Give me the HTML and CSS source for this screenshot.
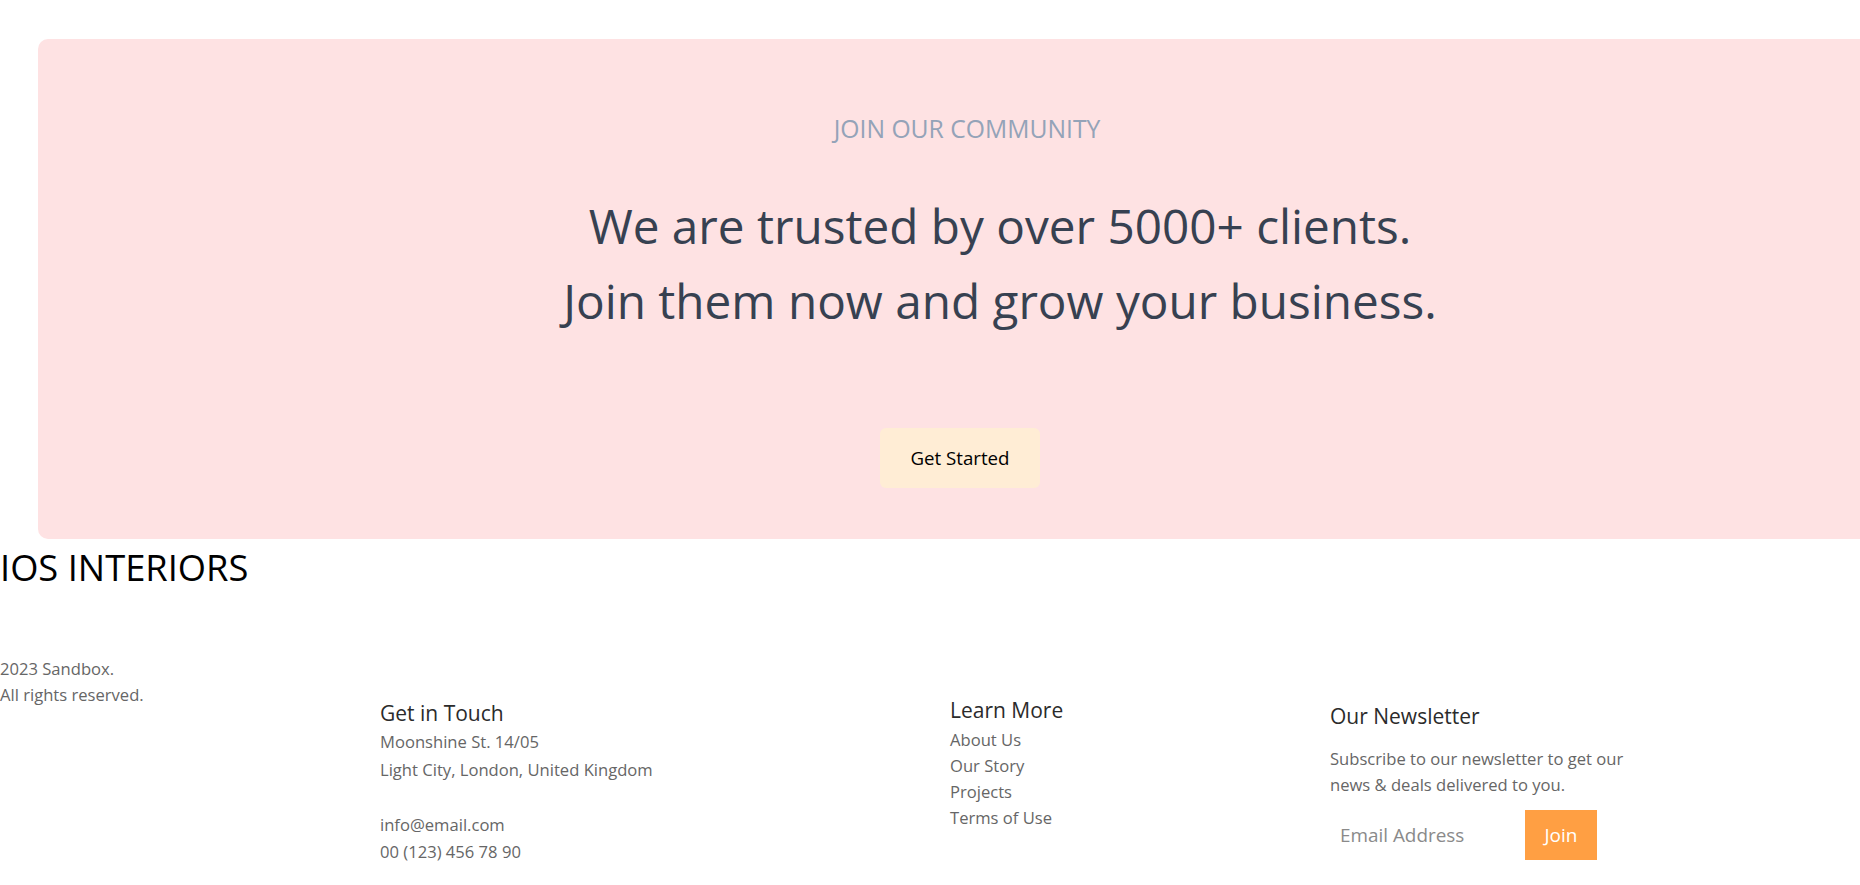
FILE: index.html
```html
<!DOCTYPE html>
<html lang="en">
<head>
<meta charset="utf-8">
<title>IOS Interiors</title>
<link rel="stylesheet" href="styles.css">
</head>
<body>
<section class="cta">
  <div class="cta-box">
    <p class="eyebrow">JOIN OUR COMMUNITY</p>
    <h2 class="headline">We are trusted by over 5000+ clients.<br>Join them now and grow your business.</h2>
    <a class="btn-start" href="#">Get Started</a>
  </div>
</section>
<footer class="footer">
  <div class="brand">
    <h1 class="brand-title">IOS INTERIORS</h1>
    <p class="copy">2023 Sandbox.<br>All rights reserved.</p>
  </div>
  <div class="col col-touch">
    <h3 class="col-title">Get in Touch</h3>
    <p class="col-text">Moonshine St. 14/05<br>Light City, London, United Kingdom<br><br>info@email.com<br>00 (123) 456 78 90</p>
  </div>
  <div class="col col-learn">
    <h3 class="col-title">Learn More</h3>
    <ul class="links">
      <li><a href="#">About Us</a></li>
      <li><a href="#">Our Story</a></li>
      <li><a href="#">Projects</a></li>
      <li><a href="#">Terms of Use</a></li>
    </ul>
  </div>
  <div class="col col-news">
    <h3 class="col-title">Our Newsletter</h3>
    <p class="news-text">Subscribe to our newsletter to get our news &amp; deals delivered to you.</p>
    <form class="news-form">
      <input class="news-input" type="email" placeholder="Email Address">
      <button class="news-btn" type="button">Join</button>
    </form>
  </div>
</footer>
</body>
</html>
```
FILE: styles.css
```css
html, body {
  margin: 0;
  padding: 0;
  overflow: hidden;
  background: #ffffff;
}
body {
  font-family: "Open Sans", "Noto Sans", sans-serif;
  width: 1860px;
  height: 885px;
}
.cta {
  padding: 39px 0 0 38px;
}
.cta-box {
  width: 1924px;
  height: 500px;
  box-sizing: border-box;
  background: #fee2e3;
  border-radius: 10px;
  padding-top: 73px;
  display: flex;
  flex-direction: column;
  align-items: center;
}
.eyebrow {
  margin: 0 66px 0 0;
  font-size: 24.7px;
  line-height: 34.5px;
  color: #94a3b8;
  font-weight: 400;
}
.headline {
  margin: 41px 0 0 0;
  font-size: 47.7px;
  line-height: 75px;
  font-weight: 400;
  color: #374151;
  text-align: center;
}
.btn-start {
  margin: 90px 80px 0 0;
  width: 160px;
  height: 60px;
  border-radius: 6px;
  background: #ffedd5;
  color: #000;
  text-decoration: none;
  font-size: 18.7px;
  display: flex;
  align-items: center;
  justify-content: center;
}
.footer {
  display: grid;
  grid-template-columns: 380px 570px 380px 1fr;
  align-items: start;
}
.brand {
  padding-top: 7px;
}
.brand-title {
  margin: 0;
  font-size: 36.3px;
  line-height: 43px;
  font-weight: 400;
  color: #000;
}
.copy {
  margin: 67px 0 0 0;
  font-size: 16.6px;
  line-height: 25.6px;
  color: #666;
}
.col-title {
  margin: 0;
  font-size: 21px;
  line-height: 28px;
  font-weight: 400;
  color: #2b2b2b;
}
.col-touch {
  padding-top: 160px;
}
.col-text {
  margin: 1px 0 0 0;
  font-size: 16.6px;
  line-height: 27.6px;
  color: #666;
}
.col-learn {
  padding-top: 157px;
}
.links {
  list-style: none;
  margin: 3px 0 0 0;
  padding: 0;
  font-size: 16.6px;
  line-height: 26.1px;
}
.links a {
  color: #666;
  text-decoration: none;
}
.col-news {
  padding-top: 163px;
}
.news-text {
  margin: 15.5px 0 0 0;
  width: 310px;
  font-size: 16.6px;
  line-height: 26px;
  color: #666;
}
.news-form {
  margin-top: 12px;
  display: flex;
}
.news-input {
  width: 195px;
  height: 50px;
  box-sizing: border-box;
  border: none;
  outline: none;
  padding: 0 10px;
  font-family: inherit;
  font-size: 18.9px;
  color: #555;
  background: #fff;
}
.news-input::placeholder {
  color: #8a8a8a;
}
.news-btn {
  width: 72px;
  height: 50px;
  border: none;
  background: #ff9f43;
  color: #fff;
  font-family: inherit;
  font-size: 19px;
  padding: 0;
}
```
